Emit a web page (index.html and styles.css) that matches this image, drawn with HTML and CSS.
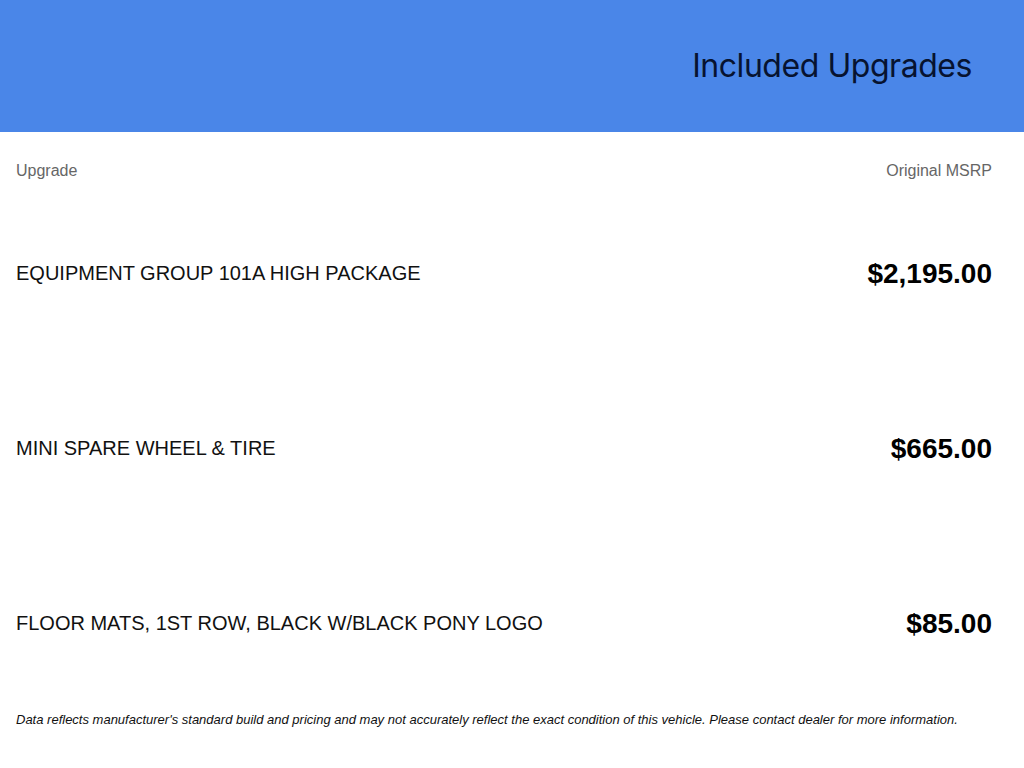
FILE: index.html
```html
<!DOCTYPE html>
<html lang="en">
<head>
<meta charset="utf-8">
<title>Included Upgrades</title>
<link rel="stylesheet" href="styles.css">
</head>
<body>
<header class="banner">
  <h1 class="banner-title">Included Upgrades</h1>
</header>
<main class="upgrades">
  <div class="labels">
    <span>Upgrade</span>
    <span>Original MSRP</span>
  </div>
  <div class="row">
    <span class="name">EQUIPMENT GROUP 101A HIGH PACKAGE</span>
    <span class="price">$2,195.00</span>
  </div>
  <div class="row">
    <span class="name">MINI SPARE WHEEL &amp; TIRE</span>
    <span class="price">$665.00</span>
  </div>
  <div class="row">
    <span class="name">FLOOR MATS, 1ST ROW, BLACK W/BLACK PONY LOGO</span>
    <span class="price">$85.00</span>
  </div>
  <p class="note">Data reflects manufacturer's standard build and pricing and may not accurately reflect the exact condition of this vehicle. Please contact dealer for more information.</p>
</main>
</body>
</html>
```
FILE: styles.css
```css
* { box-sizing: border-box; }
html, body { margin: 0; padding: 0; background: #fff; }
body { font-family: "Liberation Sans", Arial, sans-serif; color: #000; }

.banner {
  height: 132px;
  background: #4a86e8;
  display: flex;
  justify-content: flex-end;
  align-items: center;
  padding-right: 52px;
  padding-bottom: 1px;
}
.banner-title {
  margin: 0;
  font-family: Inter, "Noto Sans", sans-serif;
  font-weight: 400;
  font-size: 32px;
  letter-spacing: -0.45px;
  color: #071330;
}

.upgrades { padding: 0 32px 0 16px; }

.labels {
  display: flex;
  justify-content: space-between;
  padding-top: 29px;
  padding-bottom: 5px;
  font-size: 16px;
  line-height: 20px;
  color: #666;
}

.row {
  height: 175px;
  display: flex;
  justify-content: space-between;
  align-items: center;
}
.name { font-size: 20px; color: #111; }
.price { font-size: 28px; font-weight: 700; color: #000; }

.note {
  margin: 0;
  font-size: 13px;
  line-height: 18px;
  font-style: italic;
  color: #111;
}
```
